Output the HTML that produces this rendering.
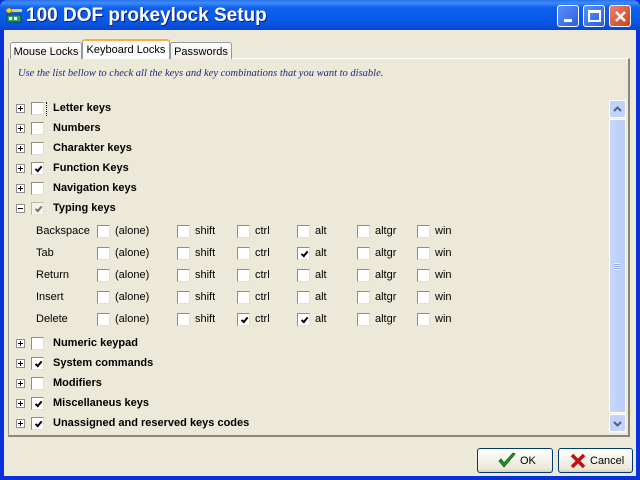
<!DOCTYPE html>
<html><head><style>
*{margin:0;padding:0;box-sizing:border-box}
body{width:640px;height:480px;overflow:hidden;background:#0831d9;font-family:"Liberation Sans",sans-serif;font-size:11px;color:#000;position:relative}
.a{position:absolute}
#title{left:0;top:0;width:640px;height:30px;background:linear-gradient(#2a6ff0 0%,#3d8cf5 10%,#1060ee 25%,#0858e6 70%,#0848d0 100%);border-radius:7px 7px 0 0}
#ttext{left:26px;top:5px;color:#fff;font:bold 19px "Liberation Sans",sans-serif;text-shadow:1px 1px #0a1e8c}
#client{left:4px;top:30px;width:632px;height:446px;background:#ece9d8}
.tb{width:22px;height:22px;top:5px;border:1px solid #fff;border-radius:3px;background:linear-gradient(135deg,#5d8ff5,#2a5fe0)}
.tab{top:42px;height:17px;border:1px solid #919b9c;border-bottom:none;background:linear-gradient(#fff,#ecebe5);padding-top:3px;text-align:center;border-radius:3px 3px 0 0;white-space:nowrap}
#panel{left:8px;top:58px;width:622px;height:379px;background:#ece9d8;border:1px solid #919b9c;border-right:2px solid #8a8776;border-bottom:2px solid #8a8776;border-top:1px solid #fff}
.cb{width:13px;height:13px;background:#fff;border:1px solid;border-right-color:#e2e0d6;border-bottom-color:#e2e0d6;border-top-color:#8f8d84;border-left-color:#8f8d84}
.pl{width:9px;height:9px;border:1px solid #8e8f8f;background:#fff}
.bl{font-weight:bold;font-size:11px}
.ck::after{content:"";position:absolute;left:3px;top:2px;width:5px;height:2px;border-left:2px solid #000;border-bottom:2px solid #000;transform:rotate(-50deg) translate(-1px,1px)}
.btn{top:448px;height:25px;border:1px solid #003c74;border-radius:3px;background:linear-gradient(#fff,#ece9d8 85%,#d6d0c5)}
</style></head><body>
<div id="title" class="a"></div>
<div class="a" style="left:6px;top:7px;width:16px;height:16px">
<svg width="16" height="16"><rect x="0" y="2" width="16" height="3" fill="#e8d14a"/><circle cx="3" cy="3.5" r="2.5" fill="#f0d840" stroke="#806000" stroke-width=".6"/><rect x="1" y="8" width="14" height="7" fill="#2aa05a" stroke="#0a4020" stroke-width=".8"/><rect x="3" y="10" width="3" height="3" fill="#fff"/><rect x="8" y="10" width="3" height="3" fill="#fff"/></svg></div>
<div id="ttext" class="a">100 DOF prokeylock Setup</div>
<div class="a tb" style="left:557px"><div class="a" style="left:6px;top:13px;width:8px;height:3px;background:#fff"></div></div>
<div class="a tb" style="left:583px"><div class="a" style="left:4px;top:4px;width:13px;height:12px;border:2px solid #fff;border-top-width:3px"></div></div>
<div class="a tb" style="left:609px;background:linear-gradient(135deg,#e9826a,#c84420)"><svg class="a" style="left:4px;top:4px" width="13" height="13"><path d="M2 2L11 11M11 2L2 11" stroke="#fff" stroke-width="2.5"/></svg></div>
<div id="client" class="a"></div>
<div id="panel" class="a"></div>
<div class="a tab" style="left:10px;width:72px">Mouse Locks</div>
<div class="a tab" style="left:82px;top:39px;width:88px;height:20px;background:#fcfcfe;border-top:2px solid #f3b33d;z-index:2;padding-top:3px">Keyboard Locks</div>
<div class="a tab" style="left:170px;width:62px">Passwords</div>
<div class="a" style="left:18px;top:68px;font:italic 10.5px 'Liberation Serif',serif;color:#1a2a80">Use the list bellow to check all the keys and key combinations that you want to disable.</div>
<div class="a" style="left:609px;top:100px;width:17px;height:333px;background:#f4f3ee"></div>
<div class="a" style="left:609px;top:100px;width:17px;height:18px;border:1px solid #fff;border-radius:2px;background:#c1d3fb"><svg class="a" style="left:3px;top:4px" width="9" height="8"><path d="M1 6L4.5 2.5L8 6" stroke="#4d6185" stroke-width="2" fill="none"/></svg></div>
<div class="a" style="left:609px;top:119px;width:17px;height:294px;border:1px solid #fff;border-radius:2px;background:linear-gradient(90deg,#c8d6fb,#b8cdfa)"></div>
<div class="a" style="left:614px;top:263px;width:6px;height:7px;background:repeating-linear-gradient(#eef3fe 0 1px,#8caaf0 1px 2px)"></div>
<div class="a" style="left:609px;top:414px;width:17px;height:18px;border:1px solid #fff;border-radius:2px;background:#c1d3fb"><svg class="a" style="left:3px;top:5px" width="9" height="8"><path d="M1 2L4.5 5.5L8 2" stroke="#4d6185" stroke-width="2" fill="none"/></svg></div>
<div class="a" style="left:46px;top:102px;height:14px;border-left:1px dotted #000"></div>
<div id="rows"></div>
<div class="a btn" style="left:477px;width:76px"><svg class="a" style="left:19px;top:3px" width="20" height="18"><path d="M2 9 L7 15 L18 2 L16 1 L7 11 L4 7 Z" fill="#1e9a2a" stroke="#0a5a10" stroke-width=".8"/></svg><span class="a" style="left:42px;top:6px">OK</span></div>
<div class="a btn" style="left:558px;width:75px"><svg class="a" style="left:11px;top:4px" width="16" height="16"><path d="M2 2 L14 14 M14 2 L2 14" stroke="#c01010" stroke-width="3.5"/></svg><span class="a" style="left:31px;top:6px">Cancel</span></div>
<script>
var h='',tops=[108,128,148,168,188,208],names=['Letter keys','Numbers','Charakter keys','Function Keys','Navigation keys','Typing keys'],chk=[0,0,0,1,0,2];
function main(y,n,c,minus){
 h+='<div class="a pl" style="left:16px;top:'+(y-4)+'px"><div class="a" style="left:1px;top:3px;width:5px;height:1px;background:#000"></div>'+(minus?'':'<div class="a" style="left:3px;top:1px;width:1px;height:5px;background:#000"></div>')+'</div>';
 h+='<div class="a cb'+(c?' ck':'')+'" style="left:31px;top:'+(y-6)+'px'+(c==2?';opacity:.5':'')+'"></div>';
 h+='<div class="a bl" style="left:53px;top:'+(y-6)+'px">'+n+'</div>';}
for(var i=0;i<6;i++)main(tops[i],names[i],chk[i],i==5);
var sub=['Backspace','Tab','Return','Insert','Delete'],cx=[97,177,237,297,357,417],cl=['(alone)','shift','ctrl','alt','altgr','win'];
var sc={'1,3':1,'4,2':1,'4,3':1};
for(var r=0;r<5;r++){var y=231+22*r;
 h+='<div class="a" style="left:36px;top:'+(y-6)+'px">'+sub[r]+'</div>';
 for(var j=0;j<6;j++){h+='<div class="a cb'+(sc[r+','+j]?' ck':'')+'" style="left:'+cx[j]+'px;top:'+(y-6)+'px"></div><div class="a" style="left:'+(cx[j]+18)+'px;top:'+(y-6)+'px">'+cl[j]+'</div>';}}
var n2=['Numeric keypad','System commands','Modifiers','Miscellaneus keys','Unassigned and reserved keys codes'],c2=[0,1,0,1,1];
for(var k=0;k<5;k++)main(343+20*k,n2[k],c2[k],0);
document.getElementById('rows').outerHTML=h;
</script>
</body></html>
